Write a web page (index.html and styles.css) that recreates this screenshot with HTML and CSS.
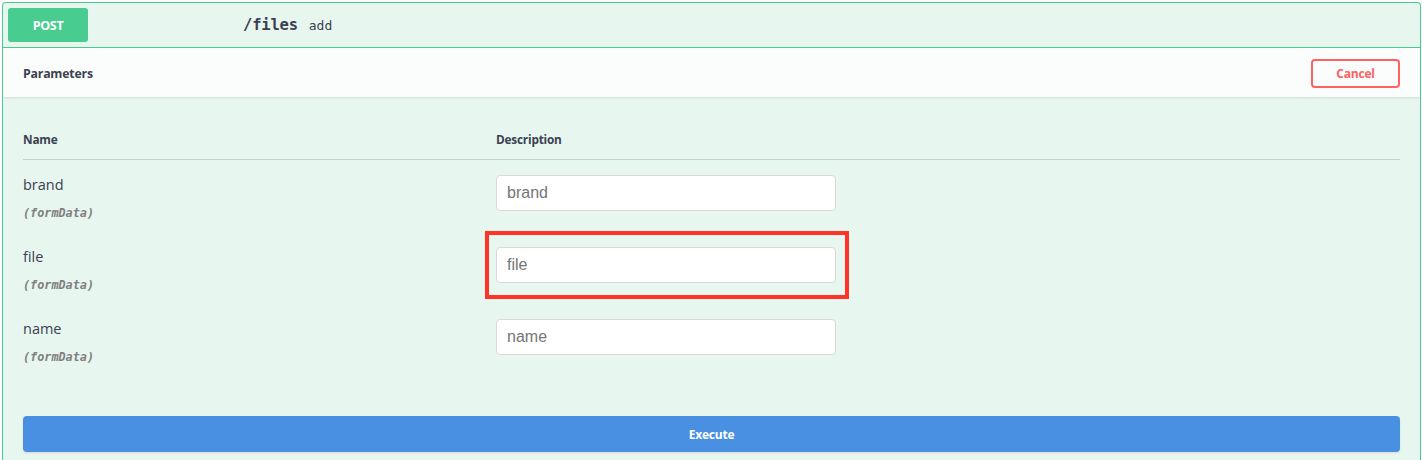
FILE: index.html
```html
<!DOCTYPE html>
<html>
<head>
<meta charset="utf-8">
<link rel="stylesheet" href="styles.css">
</head>
<body>
<div class="opblock">
  <div class="summary">
    <span class="method">POST</span>
    <span class="path">/files</span>
    <span class="desc">add</span>
  </div>
  <div class="section-header">
    <h4 class="section-title">Parameters</h4>
    <button class="btn-cancel">Cancel</button>
  </div>
  <div class="table-container">
    <div class="thead">
      <div class="th">Name</div>
      <div class="th">Description</div>
    </div>
    <div class="row">
      <div class="name-col">
        <div class="pname">brand</div>
        <div class="pin">(formData)</div>
      </div>
      <div class="desc-col">
        <div class="input-wrap"><input class="field" placeholder="brand"></div>
      </div>
    </div>
    <div class="row">
      <div class="name-col">
        <div class="pname">file</div>
        <div class="pin">(formData)</div>
      </div>
      <div class="desc-col">
        <div class="input-wrap highlighted"><input class="field" placeholder="file"><span class="annot"></span></div>
      </div>
    </div>
    <div class="row">
      <div class="name-col">
        <div class="pname">name</div>
        <div class="pin">(formData)</div>
      </div>
      <div class="desc-col">
        <div class="input-wrap"><input class="field" placeholder="name"></div>
      </div>
    </div>
    <button class="btn-execute">Execute</button>
  </div>
</div>
</body>
</html>
```
FILE: styles.css
```css
html, body {
  margin: 0;
  padding: 0;
  background: #ffffff;
}
body {
  padding: 2px 1px 0 2px;
  font-family: "Open Sans", sans-serif;
  color: #3b4151;
  overflow: hidden;
}
.opblock {
  border: 1px solid #49cc90;
  border-bottom: none;
  border-radius: 4px 4px 0 0;
  background: #e8f6f0;
  height: 457px;
  overflow: hidden;
}
.summary {
  display: flex;
  align-items: center;
  height: 44px;
  padding: 0 5px;
  border-bottom: 1px solid #49cc90;
}
.method {
  display: flex;
  align-items: center;
  justify-content: center;
  width: 80px;
  height: 34px;
  border-radius: 3px;
  background: #49cc90;
  color: #fff;
  font-weight: 700;
  font-size: 12.5px;
  letter-spacing: -0.3px;
}
.path {
  margin-left: 155px;
  font-family: "DejaVu Sans Mono", monospace;
  font-weight: 700;
  font-size: 15.5px;
  letter-spacing: -0.2px;
}
.desc {
  margin-left: 11px;
  font-family: "DejaVu Sans Mono", monospace;
  font-size: 13px;
  padding-top: 1px;
}
.section-header {
  display: flex;
  align-items: center;
  justify-content: space-between;
  height: 49px;
  padding: 0 20px;
  background: rgba(255, 255, 255, 0.8);
  box-shadow: 0 1px 2px rgba(0, 0, 0, 0.1);
}
.section-title {
  margin: 0;
  padding-top: 2px;
  font-size: 12.3px;
  font-weight: 700;
  letter-spacing: -0.2px;
}
.btn-cancel {
  width: 89px;
  height: 29px;
  margin-top: 1px;
  border: 2px solid #ff6060;
  border-radius: 4px;
  background: transparent;
  color: #ff6060;
  font-family: "Open Sans", sans-serif;
  font-weight: 700;
  font-size: 12px;
  letter-spacing: -0.2px;
}
.table-container {
  padding: 22px 20px 0 20px;
}
.thead {
  display: grid;
  grid-template-columns: 473px 1fr;
  padding: 12px 0;
  border-bottom: 1px solid rgba(59, 65, 81, 0.2);
}
.th {
  font-size: 11.8px;
  font-weight: 700;
  line-height: 16px;
  letter-spacing: -0.2px;
}
.row {
  display: grid;
  grid-template-columns: 473px 1fr;
  padding: 15px 0 11px;
}
.pname {
  font-size: 14.5px;
  line-height: 20px;
  color: #3b4151;
}
.pin {
  margin-top: 11px;
  font-family: "DejaVu Sans Mono", monospace;
  font-style: italic;
  font-weight: 700;
  font-size: 11.8px;
  line-height: 15px;
  color: #808080;
}
.input-wrap {
  position: relative;
  width: 340px;
}
.field {
  box-sizing: border-box;
  display: block;
  width: 340px;
  height: 36px;
  margin: 0;
  padding: 0 10px;
  border: 1px solid #d9d9d9;
  border-radius: 4px;
  background: #fff;
  font-family: "Liberation Sans", Arial, sans-serif;
  font-size: 16px;
  outline: none;
}
.field::placeholder {
  color: #757575;
}
.annot {
  position: absolute;
  left: -11px;
  top: -16px;
  right: -13px;
  bottom: -16px;
  border: 4px solid #ff3426;
  pointer-events: none;
}
.btn-execute {
  display: block;
  width: 100%;
  height: 36px;
  margin-top: 40px;
  border: none;
  border-radius: 4px;
  background: #4990e2;
  color: #fff;
  font-family: "Open Sans", sans-serif;
  font-weight: 700;
  font-size: 12px;
  letter-spacing: -0.2px;
  box-shadow: 0 1px 2px rgba(0, 0, 0, 0.1);
}
```
